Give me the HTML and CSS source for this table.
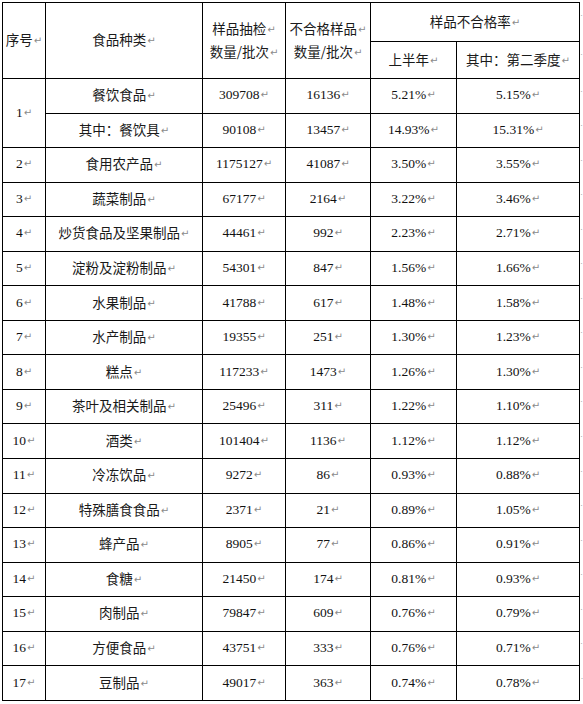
FILE: index.html
```html
<!DOCTYPE html>
<html lang="zh">
<head>
<meta charset="utf-8">
<title>样品不合格率</title>
<link rel="stylesheet" href="styles.css">
</head>
<body>
<div class="page">
<table class="grid">
<colgroup>
<col class="c-no"><col class="c-name"><col class="c-num1"><col class="c-num2"><col class="c-r1"><col class="c-r2"><col class="c-mark">
</colgroup>
<thead>
<tr class="h1">
<th rowspan="2" class="cjk">序号<i>↵</i></th>
<th rowspan="2" class="cjk">食品种类<i>↵</i></th>
<th rowspan="2" class="cjk two">样品抽检<i>↵</i><br>数量/批次<i>↵</i></th>
<th rowspan="2" class="cjk two">不合格样品<i>↵</i><br>数量/批次<i>↵</i></th>
<th colspan="2" class="cjk">样品不合格率<i>↵</i></th>
<td class="mark">·</td>
</tr>
<tr class="h2">
<th class="cjk">上半年<i>↵</i></th>
<th class="cjk">其中：第二季度<i>↵</i></th>
<td class="mark">·</td>
</tr>
</thead>
<tbody>
<tr><td rowspan="2">1<i>↵</i></td><td class="cjk">餐饮食品<i>↵</i></td><td>309708<i>↵</i></td><td>16136<i>↵</i></td><td>5.21%<i>↵</i></td><td>5.15%<i>↵</i></td><td class="mark">·</td></tr>
<tr><td class="cjk">其中：餐饮具<i>↵</i></td><td>90108<i>↵</i></td><td>13457<i>↵</i></td><td>14.93%<i>↵</i></td><td>15.31%<i>↵</i></td><td class="mark">·</td></tr>
<tr><td>2<i>↵</i></td><td class="cjk">食用农产品<i>↵</i></td><td>1175127<i>↵</i></td><td>41087<i>↵</i></td><td>3.50%<i>↵</i></td><td>3.55%<i>↵</i></td><td class="mark">·</td></tr>
<tr><td>3<i>↵</i></td><td class="cjk">蔬菜制品<i>↵</i></td><td>67177<i>↵</i></td><td>2164<i>↵</i></td><td>3.22%<i>↵</i></td><td>3.46%<i>↵</i></td><td class="mark">·</td></tr>
<tr><td>4<i>↵</i></td><td class="cjk">炒货食品及坚果制品<i>↵</i></td><td>44461<i>↵</i></td><td>992<i>↵</i></td><td>2.23%<i>↵</i></td><td>2.71%<i>↵</i></td><td class="mark">·</td></tr>
<tr><td>5<i>↵</i></td><td class="cjk">淀粉及淀粉制品<i>↵</i></td><td>54301<i>↵</i></td><td>847<i>↵</i></td><td>1.56%<i>↵</i></td><td>1.66%<i>↵</i></td><td class="mark">·</td></tr>
<tr><td>6<i>↵</i></td><td class="cjk">水果制品<i>↵</i></td><td>41788<i>↵</i></td><td>617<i>↵</i></td><td>1.48%<i>↵</i></td><td>1.58%<i>↵</i></td><td class="mark">·</td></tr>
<tr><td>7<i>↵</i></td><td class="cjk">水产制品<i>↵</i></td><td>19355<i>↵</i></td><td>251<i>↵</i></td><td>1.30%<i>↵</i></td><td>1.23%<i>↵</i></td><td class="mark">·</td></tr>
<tr><td>8<i>↵</i></td><td class="cjk">糕点<i>↵</i></td><td>117233<i>↵</i></td><td>1473<i>↵</i></td><td>1.26%<i>↵</i></td><td>1.30%<i>↵</i></td><td class="mark">·</td></tr>
<tr><td>9<i>↵</i></td><td class="cjk">茶叶及相关制品<i>↵</i></td><td>25496<i>↵</i></td><td>311<i>↵</i></td><td>1.22%<i>↵</i></td><td>1.10%<i>↵</i></td><td class="mark">·</td></tr>
<tr><td>10<i>↵</i></td><td class="cjk">酒类<i>↵</i></td><td>101404<i>↵</i></td><td>1136<i>↵</i></td><td>1.12%<i>↵</i></td><td>1.12%<i>↵</i></td><td class="mark">·</td></tr>
<tr><td>11<i>↵</i></td><td class="cjk">冷冻饮品<i>↵</i></td><td>9272<i>↵</i></td><td>86<i>↵</i></td><td>0.93%<i>↵</i></td><td>0.88%<i>↵</i></td><td class="mark">·</td></tr>
<tr><td>12<i>↵</i></td><td class="cjk">特殊膳食食品<i>↵</i></td><td>2371<i>↵</i></td><td>21<i>↵</i></td><td>0.89%<i>↵</i></td><td>1.05%<i>↵</i></td><td class="mark">·</td></tr>
<tr><td>13<i>↵</i></td><td class="cjk">蜂产品<i>↵</i></td><td>8905<i>↵</i></td><td>77<i>↵</i></td><td>0.86%<i>↵</i></td><td>0.91%<i>↵</i></td><td class="mark">·</td></tr>
<tr><td>14<i>↵</i></td><td class="cjk">食糖<i>↵</i></td><td>21450<i>↵</i></td><td>174<i>↵</i></td><td>0.81%<i>↵</i></td><td>0.93%<i>↵</i></td><td class="mark">·</td></tr>
<tr><td>15<i>↵</i></td><td class="cjk">肉制品<i>↵</i></td><td>79847<i>↵</i></td><td>609<i>↵</i></td><td>0.76%<i>↵</i></td><td>0.79%<i>↵</i></td><td class="mark">·</td></tr>
<tr><td>16<i>↵</i></td><td class="cjk">方便食品<i>↵</i></td><td>43751<i>↵</i></td><td>333<i>↵</i></td><td>0.76%<i>↵</i></td><td>0.71%<i>↵</i></td><td class="mark">·</td></tr>
<tr><td>17<i>↵</i></td><td class="cjk">豆制品<i>↵</i></td><td>49017<i>↵</i></td><td>363<i>↵</i></td><td>0.74%<i>↵</i></td><td>0.78%<i>↵</i></td><td class="mark">·</td></tr>
</tbody>
</table>
</div>
</body>
</html>
```
FILE: styles.css
```css
html, body {
  margin: 0;
  padding: 0;
  background: #fff;
}
.page {
  padding: 2px 0 0 2px;
}
.grid {
  border-collapse: collapse;
  table-layout: fixed;
  width: 582px;
  font-family: "Liberation Serif", "Noto Sans CJK SC", serif;
  font-size: 13.5px;
  color: #111;
}
.c-no { width: 43px; }
.c-name { width: 157px; }
.c-num1 { width: 83px; }
.c-num2 { width: 85px; }
.c-r1 { width: 86px; }
.c-r2 { width: 123px; }
.c-mark { width: 4px; }
.grid th,
.grid td {
  border: 1px solid #000;
  padding: 0;
  text-align: center;
  vertical-align: middle;
  font-weight: normal;
  white-space: nowrap;
  line-height: 16px;
}
.grid .cjk {
  font-family: "Noto Sans CJK SC", sans-serif;
  font-size: 13.5px;
  color: #1a1a1a;
}
.grid .two {
  line-height: 20px;
}
.grid i {
  font-style: normal;
  font-family: "DejaVu Sans", sans-serif;
  font-size: 10px;
  color: #8a8a8a;
  margin-left: 1px;
  position: relative;
  top: -1px;
}
.h1 { height: 39px; }
.h2 { height: 37px; }
tbody tr { height: 34.55px; }
.grid td.mark {
  border: none;
  color: #999;
  font-size: 9px;
  text-align: right;
  vertical-align: top;
  padding-top: 8px;
  line-height: 9px;
}
```
